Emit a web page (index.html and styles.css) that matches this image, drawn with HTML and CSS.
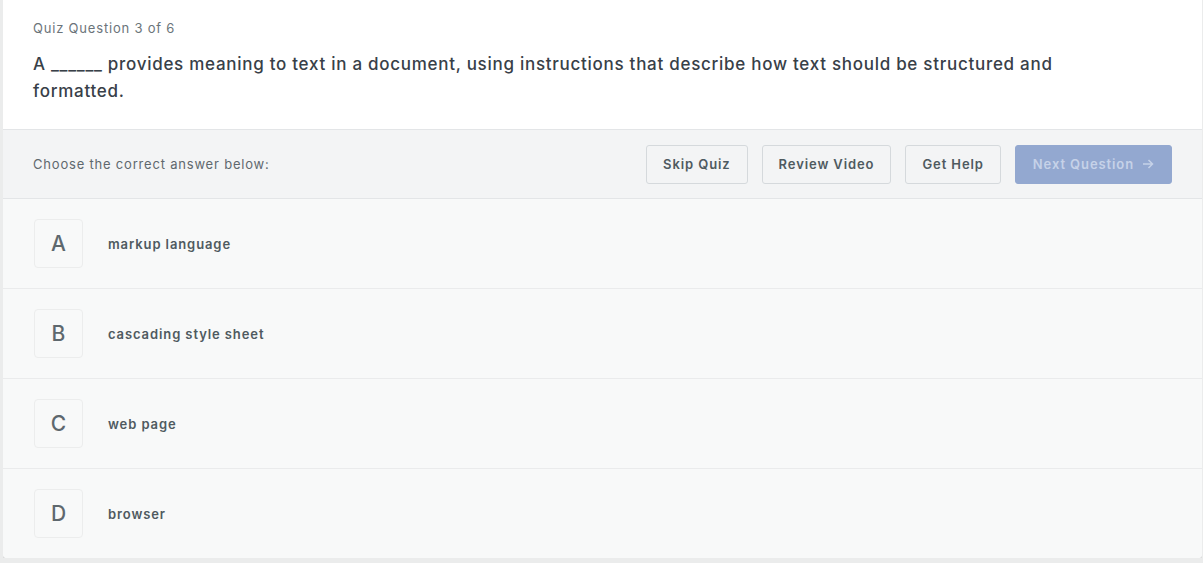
FILE: index.html
```html
<!DOCTYPE html>
<html>
<head>
<meta charset="utf-8">
<link rel="stylesheet" href="styles.css">
</head>
<body>
<div class="card">
  <div class="head">
    <div class="counter">Quiz Question 3 of 6</div>
    <div class="question">A ______ provides meaning to text in a document, using instructions that describe how text should be structured and formatted.</div>
  </div>
  <div class="bar">
    <div class="prompt">Choose the correct answer below:</div>
    <div class="actions">
      <button class="btn">Skip Quiz</button>
      <button class="btn">Review Video</button>
      <button class="btn">Get Help</button>
      <button class="btn next">Next Question
        <svg width="12" height="12" viewBox="0 0 12 12"><path d="M1 6h9.5M6.5 2l4 4-4 4" fill="none" stroke="currentColor" stroke-width="1.5"/></svg>
      </button>
    </div>
  </div>
  <ul class="answers">
    <li class="answer"><span class="letter">A</span><span class="text">markup language</span></li>
    <li class="answer"><span class="letter">B</span><span class="text">cascading style sheet</span></li>
    <li class="answer"><span class="letter">C</span><span class="text">web page</span></li>
    <li class="answer"><span class="letter">D</span><span class="text">browser</span></li>
  </ul>
</div>
</body>
</html>
```
FILE: styles.css
```css
* { box-sizing: border-box; }
html, body { margin: 0; padding: 0; }
body {
  background: #ebecec;
  font-family: Inter, "Liberation Sans", sans-serif;
  color: #384048;
  padding: 0 1px 0 3px;
}
.card {
  background: #fff;
  border-radius: 0 0 4px 4px;
  box-shadow: 0 2px 0 #d9dadb;
  overflow: hidden;
}
.head {
  padding: 19px 30px 24px 30px;
  border-bottom: 1px solid #e3e5e7;
}
.counter {
  font-size: 13px;
  color: #6b747a;
  line-height: 18px;
  margin-bottom: 14px;
  letter-spacing: 0.8px;
}
.question {
  font-size: 17px;
  font-weight: 500;
  line-height: 27px;
  color: #384048;
  max-width: 1060px;
  letter-spacing: 0.72px;
}
.bar {
  background: #f3f4f5;
  display: flex;
  align-items: center;
  justify-content: space-between;
  height: 69px;
  padding: 0 30px;
  border-bottom: 1px solid #e3e5e7;
}
.prompt { font-size: 13px; color: #5f686e; letter-spacing: 0.8px; }
.actions { display: flex; gap: 14px; }
.btn {
  font-family: inherit;
  font-size: 13px;
  font-weight: 600;
  letter-spacing: 0.9px;
  color: #4f5a60;
  background: #f3f4f5;
  border: 1px solid #d5d9dc;
  border-radius: 3px;
  height: 39px;
  padding: 0 16px;
  display: inline-flex;
  align-items: center;
  justify-content: center;
  gap: 8px;
}
.next {
  background: #93a8d0;
  border-color: #93a8d0;
  color: #c6d2e8;
  padding: 0 17px;
}
.answers { list-style: none; margin: 0; padding: 0; }
.answer {
  background: #f8f9f9;
  height: 90px;
  display: flex;
  align-items: center;
  padding: 0 31px;
  border-top: 1px solid #eaebec;
}
.answer:first-child { border-top: none; height: 89px; }
.letter {
  width: 49px;
  height: 49px;
  border: 1px solid #eceded;
  border-radius: 4px;
  display: flex;
  align-items: center;
  justify-content: center;
  font-size: 21px;
  font-weight: 500;
  color: #5e686e;
  background: #f8f9f9;
}
.text {
  margin-left: 25px;
  font-size: 13px;
  font-weight: 600;
  color: #4f5a60;
  letter-spacing: 0.9px;
}
```
